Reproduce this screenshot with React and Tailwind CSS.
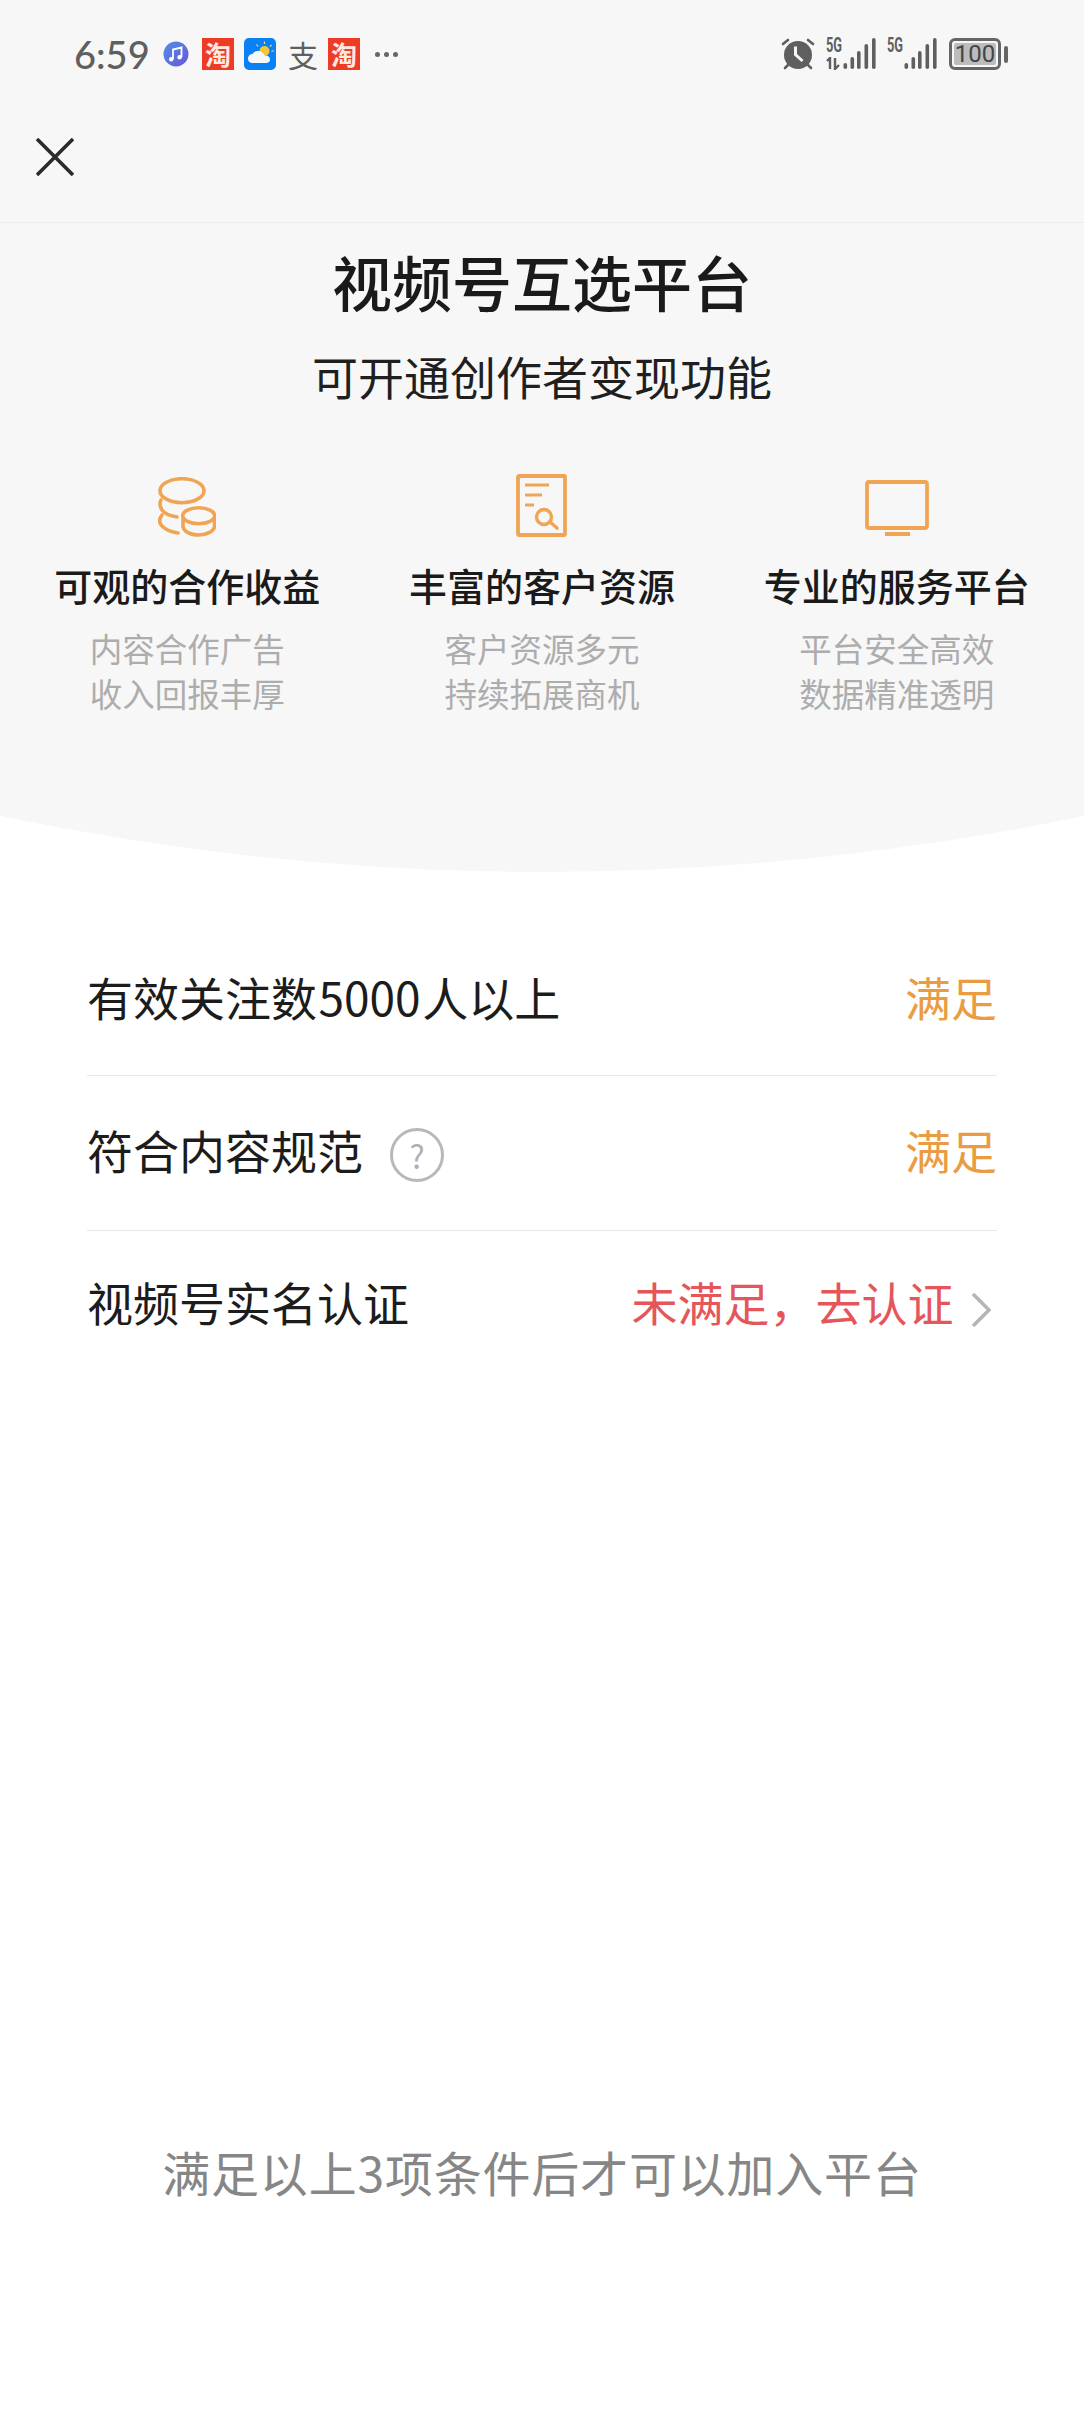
const features = [
  { title: "可观的合作收益", lines: ["内容合作广告", "收入回报丰厚"], icon: "coins" },
  { title: "丰富的客户资源", lines: ["客户资源多元", "持续拓展商机"], icon: "doc" },
  { title: "专业的服务平台", lines: ["平台安全高效", "数据精准透明"], icon: "screen" },
];

const CoinsIcon = () => (
  <svg width="58" height="60" viewBox="0 0 58 60" fill="none" stroke="#f0a555" strokeWidth="3.6" strokeLinecap="round">
    <ellipse cx="24" cy="13.7" rx="22" ry="12" />
    <path d="M3 23C1 27 2 30 4 33C7 37 12 39 19 40" />
    <path d="M4 38C1 42 1 46 4 49C8 53 13 55 20 56" />
    <ellipse cx="40.7" cy="38.7" rx="16" ry="8" />
    <path d="M25 42V49C25 54 32 58 40.7 58C49 58 56.5 54 56.5 49V42" />
  </svg>
);

const DocIcon = () => (
  <svg width="51" height="63" viewBox="0 0 51 63" fill="none" stroke="#f0a555" strokeWidth="3.8">
    <rect x="2" y="2" width="47" height="59" rx="1" />
    <path d="M9 11H33M9 21H26M9 31H18" strokeWidth="3.2" />
    <circle cx="28" cy="43" r="7.5" strokeWidth="3.4" />
    <path d="M34 48L41 54" strokeWidth="3.6" strokeLinecap="round" />
  </svg>
);

const ScreenIcon = () => (
  <svg width="64" height="57" viewBox="0 0 64 57" fill="none" stroke="#f0a555" strokeWidth="3.8">
    <rect x="2" y="2" width="60" height="46" rx="2" />
    <path d="M20 54H45" strokeWidth="4" />
  </svg>
);

const icons = {
  coins: <CoinsIcon />,
  doc: <DocIcon />,
  screen: <ScreenIcon />,
};

const TaoIcon = () => (
  <div className="flex h-[32px] w-[32px] items-center justify-center bg-[#ec3c26] text-[26px] leading-none font-bold text-[#fde9e2]">
    淘
  </div>
);

const WeatherIcon = () => (
  <svg width="32" height="32" viewBox="0 0 32 32">
    <rect width="32" height="32" rx="5" fill="#0a80f5" />
    <circle cx="20.5" cy="13" r="5" fill="#f7c638" />
    <path d="M20.5 3.5V6M12.5 6.5L14 8.5M27.5 7L26 8.5M30 13H27.5" stroke="#f5d98a" strokeWidth="1.2" />
    <path d="M9 25C5.5 25 4 23 4 20.5C4 18 6 16 8.5 16C10 13.5 12.5 12.5 15 13C18 13.5 20 15.5 20.5 17.5C24 17 26 19 26 21.5C26 23.5 24.5 25 22 25Z" fill="#f4f8fb" />
  </svg>
);

const MusicIcon = () => (
  <svg width="26" height="26" viewBox="0 0 26 26">
    <defs>
      <linearGradient id="musicBg" x1="0" y1="0" x2="1" y2="1">
        <stop offset="0" stopColor="#4f8fe6" />
        <stop offset="1" stopColor="#6a55d8" />
      </linearGradient>
    </defs>
    <circle cx="13" cy="13" r="12.5" fill="url(#musicBg)" />
    <path d="M10 18V8.5L18.5 6.5V16" fill="none" stroke="#fff" strokeWidth="1.8" />
    <circle cx="8.2" cy="18.2" r="2.2" fill="#fff" />
    <circle cx="16.6" cy="16.2" r="2.2" fill="#fff" />
  </svg>
);

const AlarmIcon = () => (
  <svg width="34" height="32" viewBox="0 0 34 32">
    <circle cx="17" cy="17" r="14" fill="#5f5f5f" />
    <path d="M7 27L4 30M27 27L30 30M2 6L7 2M32 6L27 2" stroke="#5f5f5f" strokeWidth="2.6" strokeLinecap="round" />
    <path d="M14.5 8.5V16.5L21.5 23" fill="none" stroke="#f7f7f7" strokeWidth="3" />
  </svg>
);

const SignalIcon = ({ arrows }) => (
  <div className="flex h-[32px] w-[50px]">
    <div className="flex w-[16px] flex-col">
      <span className="h-[15px] origin-left scale-x-[0.64] font-['Roboto',sans-serif] text-[20px] leading-[15px] font-bold whitespace-nowrap text-[#5f5f5f]">
        5G
      </span>
      {arrows && (
        <svg width="16" height="13" viewBox="0 0 16 13" className="mt-[4px]" fill="none" stroke="#5f5f5f" strokeWidth="2.4">
          <path d="M1 4L4 1V12M9 1V12L13 8" />
        </svg>
      )}
    </div>
    <svg width="34" height="32" viewBox="16 0 34 32">
      <g fill="#5f5f5f">
        <rect x="17.5" y="25" width="3.6" height="6" rx="1.8" />
        <rect x="24.5" y="19" width="3.6" height="12" rx="1.8" />
        <rect x="31" y="13" width="3.6" height="18" rx="1.8" />
        <rect x="38.5" y="6" width="3.6" height="25" rx="1.8" />
        <rect x="46" y="0" width="3.6" height="31" rx="1.8" />
      </g>
    </svg>
  </div>
);

const Battery = () => (
  <div className="flex items-center gap-[3px]">
    <div className="h-[32px] w-[52px] rounded-[6px] border-[3px] border-[#666666] p-[2px]">
      <div className="flex h-full items-center justify-center rounded-[2px] bg-[#bcbcbc] font-['Roboto',sans-serif] text-[24px] leading-none text-[#444444]">
        100
      </div>
    </div>
    <div className="h-[17px] w-[4px] rounded-[2px] bg-[#666666]" />
  </div>
);

const StatusBar = () => (
  <div className="flex h-[108px] items-center justify-between pr-[76px] pl-[74px]">
    <div className="flex items-center">
      <span className="w-[75px] font-['Lato',sans-serif] text-[38px] leading-none font-medium text-[#5f5f5f]">6:59</span>
      <div className="ml-[14px]">
        <MusicIcon />
      </div>
      <div className="ml-[13px]">
        <TaoIcon />
      </div>
      <div className="ml-[10px]">
        <WeatherIcon />
      </div>
      <span className="ml-[12px] w-[30px] text-center text-[30px] leading-none text-[#5f5f5f]">支</span>
      <div className="ml-[10px]">
        <TaoIcon />
      </div>
      <div className="ml-[15px] flex gap-[4px]">
        <div className="h-[5px] w-[5px] rounded-full bg-[#666666]" />
        <div className="h-[5px] w-[5px] rounded-full bg-[#666666]" />
        <div className="h-[5px] w-[5px] rounded-full bg-[#666666]" />
      </div>
    </div>
    <div className="flex items-center">
      <AlarmIcon />
      <div className="ml-[11px]">
        <SignalIcon arrows />
      </div>
      <div className="ml-[11px]">
        <SignalIcon />
      </div>
      <div className="ml-[12px]">
        <Battery />
      </div>
    </div>
  </div>
);

const Row = ({ label, help, children, className }) => (
  <div className={`flex items-center justify-between border-[#e8e8e8] text-[46px] text-[#1c1c1c] ${className}`}>
    <div className="flex items-center">
      <span>{label}</span>
      {help && (
        <span className="mt-[11px] ml-[27px] flex h-[54px] w-[54px] items-center justify-center rounded-full border-[3px] border-[#b8b8b8] text-[32px] leading-none text-[#b0b0b0]">
          ?
        </span>
      )}
    </div>
    {children}
  </div>
);

export default function App() {
  return (
    <div className="flex h-[2412px] flex-col overflow-hidden bg-white font-['Noto_Sans_CJK_SC',sans-serif]">
      {/* Header */}
      <div className="bg-[#f7f7f7]">
        <StatusBar />
        <div className="flex h-[115px] items-center border-b border-[#ececec] pb-[16px] pl-[36px]">
          <svg width="38" height="38" viewBox="0 0 38 38" stroke="#2b2b2b" strokeWidth="3.6" fill="none">
            <path d="M1 1L37 37M37 1L1 37" />
          </svg>
        </div>

        <div className="flex flex-col items-center pt-[18px] pb-[101px]">
          <h1 className="text-[60px] leading-[80px] font-medium text-[#1a1a1a]">视频号互选平台</h1>
          <p className="mt-[24px] text-[46px] leading-[60px] text-[#1f1f1f]">可开通创作者变现功能</p>

          <div className="mt-[68px] grid w-full grid-cols-3 px-[10px]">
            {features.map((item) => (
              <div key={item.title} className="flex flex-col items-center">
                <div className="flex h-[64px] items-end">{icons[item.icon]}</div>
                <div className="mt-[23px] text-[38px] leading-[50px] font-medium text-[#1a1a1a]">{item.title}</div>
                <div className="mt-[15px] text-center text-[32.5px] leading-[45px] text-[#adadad]">
                  {item.lines.map((line) => (
                    <div key={line}>{line}</div>
                  ))}
                </div>
              </div>
            ))}
          </div>
        </div>
      </div>

      {/* curve under header */}
      <svg width="1084" height="56" viewBox="0 0 1084 56" className="block">
        <path d="M0 0H1084Q542 112 0 0Z" fill="#f7f7f7" />
      </svg>

      {/* Conditions */}
      <div className="mt-[50px] px-[87px]">
        <Row
          label={
            <>
              有效关注数<span className="mx-[1.5px]">5000</span>人以上
            </>
          }
          className="h-[154px] border-b pb-1"
        >
          <span className="text-[#e99c42]">满足</span>
        </Row>
        <Row label="符合内容规范" help className="h-[155px] border-b pb-[7px]">
          <span className="text-[#e99c42]">满足</span>
        </Row>
        <Row label="视频号实名认证" className="h-[154px] pb-[13px]">
          <div className="flex items-center">
            <span className="translate-x-[1.5px] text-[#e5565a]">未满足，去认证</span>
            <svg width="20" height="36" viewBox="0 0 20 36" fill="none" stroke="#b5b5b5" strokeWidth="3.6" className="mt-[17px] mr-[6px] ml-[19px]">
              <path d="M2 2L18 18L2 34" />
            </svg>
          </div>
        </Row>
      </div>

      <div className="mt-auto pb-[211px] text-center text-[48px] leading-[60px] tracking-[0.8px] text-[#868686]">
        满足以上3项条件后才可以加入平台
      </div>
    </div>
  );
}
